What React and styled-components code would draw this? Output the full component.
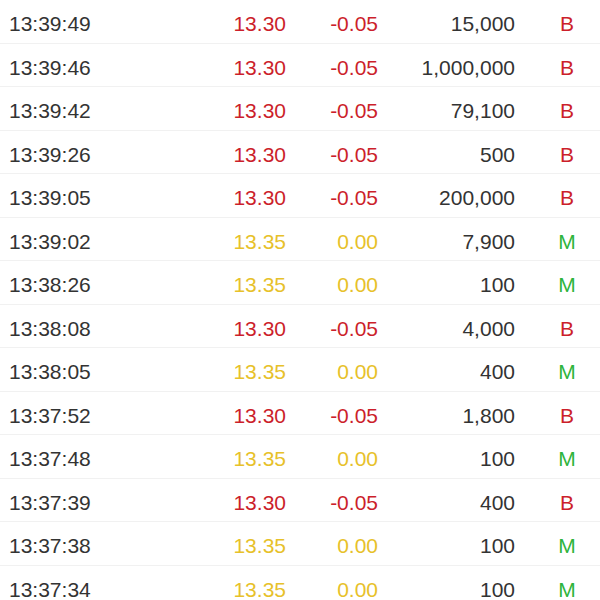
import React from "react";
import styled, { createGlobalStyle } from "styled-components";

const Global = createGlobalStyle`
  html, body { margin: 0; padding: 0; background: #fff; }
  body { font-family: "Liberation Sans", Arial, sans-serif; }
`;

const List = styled.div`
  width: 600px;
  height: 600px;
  overflow: hidden;
  background: #fff;
`;

const Row = styled.div`
  display: grid;
  grid-template-columns: 200px 86px 92px 137px 1fr;
  align-items: center;
  height: 43.5px;
  box-sizing: border-box;
  padding-top: 6px;
  border-bottom: 1px solid #f1f1f1;
  font-size: 21px;
  line-height: 24px;
  color: #333;
`;

const tone = { red: "#cc1f2b", yellow: "#e7c12a", green: "#2eb43c", dark: "#333" };

const Time = styled.span`
  padding-left: 9px;
  color: #333;
`;

const Num = styled.span`
  text-align: right;
  color: ${(p) => tone[p.$tone || "dark"]};
`;

const Side = styled.span`
  text-align: center;
  padding-left: 19px;
  color: ${(p) => (p.$side === "B" ? tone.red : tone.green)};
`;

const data = [
  ["13:39:49", "13.30", "-0.05", "15,000", "B"],
  ["13:39:46", "13.30", "-0.05", "1,000,000", "B"],
  ["13:39:42", "13.30", "-0.05", "79,100", "B"],
  ["13:39:26", "13.30", "-0.05", "500", "B"],
  ["13:39:05", "13.30", "-0.05", "200,000", "B"],
  ["13:39:02", "13.35", "0.00", "7,900", "M"],
  ["13:38:26", "13.35", "0.00", "100", "M"],
  ["13:38:08", "13.30", "-0.05", "4,000", "B"],
  ["13:38:05", "13.35", "0.00", "400", "M"],
  ["13:37:52", "13.30", "-0.05", "1,800", "B"],
  ["13:37:48", "13.35", "0.00", "100", "M"],
  ["13:37:39", "13.30", "-0.05", "400", "B"],
  ["13:37:38", "13.35", "0.00", "100", "M"],
  ["13:37:34", "13.35", "0.00", "100", "M"],
];

export default function App() {
  return (
    <>
      <Global />
      <List>
        {data.map(([t, p, c, v, s]) => {
          const tn = c.startsWith("-") ? "red" : "yellow";
          return (
            <Row key={t}>
              <Time>{t}</Time>
              <Num $tone={tn}>{p}</Num>
              <Num $tone={tn}>{c}</Num>
              <Num>{v}</Num>
              <Side $side={s}>{s}</Side>
            </Row>
          );
        })}
      </List>
    </>
  );
}
